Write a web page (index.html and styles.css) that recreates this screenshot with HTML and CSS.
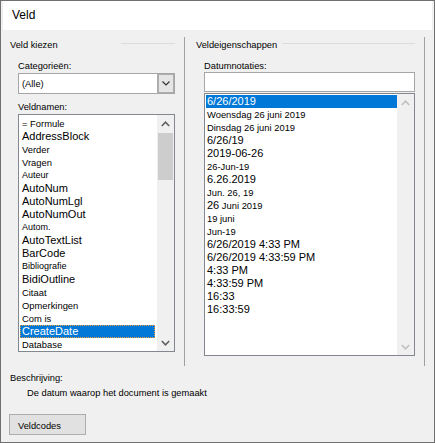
FILE: index.html
```html
<!DOCTYPE html>
<html lang="nl">

<head>
  <meta charset="UTF-8">
  <meta name="viewport" content="width=device-width, initial-scale=1.0">
  <title>Veld</title>
  <link rel="stylesheet" href="styles.css">
</head>

<body>
  <div class="window">
    <div class="titlebar">Veld</div>

    <div class="main">
      <section class="pane pane-left">
        <div class="group-head">
          <span>Veld kiezen</span>
          <span class="rule rule-left"></span>
        </div>
        <div class="group-body">
          <p class="field-label">Categorieën:</p>
          <div class="combo">
            <span class="combo-value">(Alle)</span>
            <span class="combo-btn">
              <svg width="8" height="5" viewBox="0 0 8 5"><polyline points="0.5,0.5 4,4 7.5,0.5" fill="none" stroke="#333" stroke-width="1.2"/></svg>
            </span>
          </div>
          <p class="field-label second">Veldnamen:</p>
          <div class="listbox list-fields">
            <ul class="items">
              <li class="sm">= Formule</li>
              <li class="lg">AddressBlock</li>
              <li class="sm">Verder</li>
              <li class="sm">Vragen</li>
              <li class="xs">Auteur</li>
              <li class="lg">AutoNum</li>
              <li class="lg">AutoNumLgl</li>
              <li class="lg">AutoNumOut</li>
              <li class="xs">Autom.</li>
              <li class="lg">AutoTextList</li>
              <li class="lg">BarCode</li>
              <li class="xs">Bibliografie</li>
              <li class="lg">BidiOutline</li>
              <li class="sm">Citaat</li>
              <li class="sm">Opmerkingen</li>
              <li class="sm">Com is</li>
              <li class="lg selected focus">CreateDate</li>
              <li class="sm">Database</li>
            </ul>
            <div class="scrollbar">
              <span class="arrow">
                <svg width="9" height="6" viewBox="0 0 9 6"><polyline points="0.8,5 4.5,1.2 8.2,5" fill="none" stroke="#606060" stroke-width="1.6"/></svg>
              </span>
              <span class="track">
                <span class="thumb"></span>
              </span>
              <span class="arrow">
                <svg width="9" height="6" viewBox="0 0 9 6"><polyline points="0.8,1 4.5,4.8 8.2,1" fill="none" stroke="#606060" stroke-width="1.6"/></svg>
              </span>
            </div>
          </div>
        </div>
      </section>

      <section class="pane pane-right">
        <div class="group-head">
          <span>Veldeigenschappen</span>
          <span class="rule rule-right"></span>
        </div>
        <div class="group-body">
          <p class="field-label">Datumnotaties:</p>
          <div class="textbox"></div>
          <div class="listbox list-formats">
            <ul class="items">
              <li class="lg selected">6/26/2019</li>
              <li class="sm">Woensdag 26 juni 2019</li>
              <li class="sm">Dinsdag 26 juni 2019</li>
              <li class="lg">6/26/19</li>
              <li class="lg">2019-06-26</li>
              <li class="sm">26-Jun-19</li>
              <li class="lg">6.26.2019</li>
              <li class="sm">Jun. 26, 19</li>
              <li class="sm"><span class="lg">26</span> Juni 2019</li>
              <li class="sm">19 juni</li>
              <li class="sm">Jun-19</li>
              <li class="lg">6/26/2019 4:33 PM</li>
              <li class="lg">6/26/2019 4:33:59 PM</li>
              <li class="lg">4:33 PM</li>
              <li class="lg">4:33:59 PM</li>
              <li class="lg">16:33</li>
              <li class="lg">16:33:59</li>
            </ul>
            <div class="scrollbar disabled">
              <span class="arrow">
                <svg width="9" height="6" viewBox="0 0 9 6"><polyline points="0.8,5 4.5,1.2 8.2,5" fill="none" stroke="#c0c0c0" stroke-width="1.6"/></svg>
              </span>
              <span class="track"></span>
              <span class="arrow">
                <svg width="9" height="6" viewBox="0 0 9 6"><polyline points="0.8,1 4.5,4.8 8.2,1" fill="none" stroke="#c0c0c0" stroke-width="1.6"/></svg>
              </span>
            </div>
          </div>
        </div>
      </section>
    </div>

    <div class="footer">
      <p class="field-label">Beschrijving:</p>
      <p class="description">De datum waarop het document is gemaakt</p>
      <button class="button" type="button">Veldcodes</button>
    </div>
  </div>
</body>

</html>
```

FILE: styles.css
```css
* {
  box-sizing: border-box;
}

:root {
  --ui-font: "Liberation Sans", Arial, sans-serif;
  --ui-size: 9.3px;
  --face: #f0f0f0;
  --line: #a0a0a0;
  --list-border: #828790;
  --select: #0078d7;
}

html,
body {
  margin: 0;
  padding: 0;
}

body {
  font-family: var(--ui-font);
  font-size: var(--ui-size);
  color: #000;
}

p {
  margin: 0;
}

.window {
  width: 435px;
  height: 443px;
  border: 1px solid #707070;
  background-color: var(--face);
  overflow: hidden;
}

.titlebar {
  height: 29px;
  margin: 0 2px;
  padding-left: 9px;
  background-color: #fff;
  font-size: 12px;
  line-height: 29px;
}

.main {
  display: flex;
  height: 329px;
  margin-top: 7px;
}

.pane {
  border-right: 1px solid var(--line);
}

.pane-left {
  width: 184px;
  padding: 0 9px;
}

.pane-right {
  width: 240px;
  padding: 0 9px 0 11px;
}

.group-head {
  display: flex;
  align-items: flex-start;
  padding-top: 2px;
  line-height: 12px;
}

.rule {
  height: 1px;
  margin-top: 4px;
  margin-left: auto;
  background-color: #dcdcdc;
}

.rule-left {
  width: 54px;
}

.rule-right {
  width: 133px;
}

.group-body {
  padding-left: 8px;
}

.field-label {
  margin-top: 9px;
  line-height: 12px;
}

.field-label.second {
  margin-top: 7px;
}

/* combo box */
.combo {
  display: flex;
  height: 21px;
  margin-top: 1px;
  border: 1px solid #a6a6a6;
  background-color: #fff;
}

.combo-value {
  flex: 1;
  padding: 1px 0 0 3px;
  line-height: 18px;
}

.combo-btn {
  display: flex;
  justify-content: center;
  align-items: center;
  width: 17px;
  border: 1px solid #adadad;
  border-left-width: 2px;
  background-color: #e5e5e5;
}

.textbox {
  height: 20px;
  border: 1px solid #a6a6a6;
  background-color: #fff;
}

/* list boxes */
.listbox {
  display: flex;
  margin-top: 1px;
  border: 1px solid var(--list-border);
  background-color: #fff;
}

.list-fields {
  height: 238px;
}

.list-formats {
  height: 263px;
}

.items {
  flex: 1;
  margin: 0;
  padding: 2px 0 0;
  list-style: none;
  overflow: hidden;
}

.list-formats .items {
  padding-top: 1px;
}

.items li {
  height: 13px;
  margin: 0 2px 0 1px;
  padding-left: 2px;
  line-height: 13px;
  white-space: nowrap;
}

.list-formats .items li {
  margin-right: 0;
  padding-left: 1px;
}

.sm {
  font-size: 9.4px;
}

.xs {
  font-size: 9px;
}

.lg {
  font-size: 11px;
}

.selected {
  background-color: var(--select);
  color: #fff;
}

.focus {
  outline: 1px dotted #f0a040;
  outline-offset: -1px;
}

.scrollbar {
  display: flex;
  flex-direction: column;
  width: 17px;
  background-color: var(--face);
}

.arrow {
  display: flex;
  justify-content: center;
  align-items: center;
  height: 17px;
  flex-shrink: 0;
}

.track {
  flex: 1;
  padding: 1px 1px 0;
}

.thumb {
  display: block;
  height: 47px;
  background-color: #cdcdcd;
}

/* bottom part */
.footer {
  padding-left: 9px;
}

.footer .field-label {
  margin-top: 6px;
}

.description {
  margin-top: 3px;
  padding-left: 17px;
  line-height: 12px;
}

.button {
  display: block;
  width: 77px;
  height: 21px;
  margin: 15px 0 0 -1px;
  padding: 2px 0 0 8px;
  border: 1px solid #adadad;
  background-color: #e1e1e1;
  font-family: var(--ui-font);
  font-size: var(--ui-size);
  color: #000;
  text-align: left;
}
```
